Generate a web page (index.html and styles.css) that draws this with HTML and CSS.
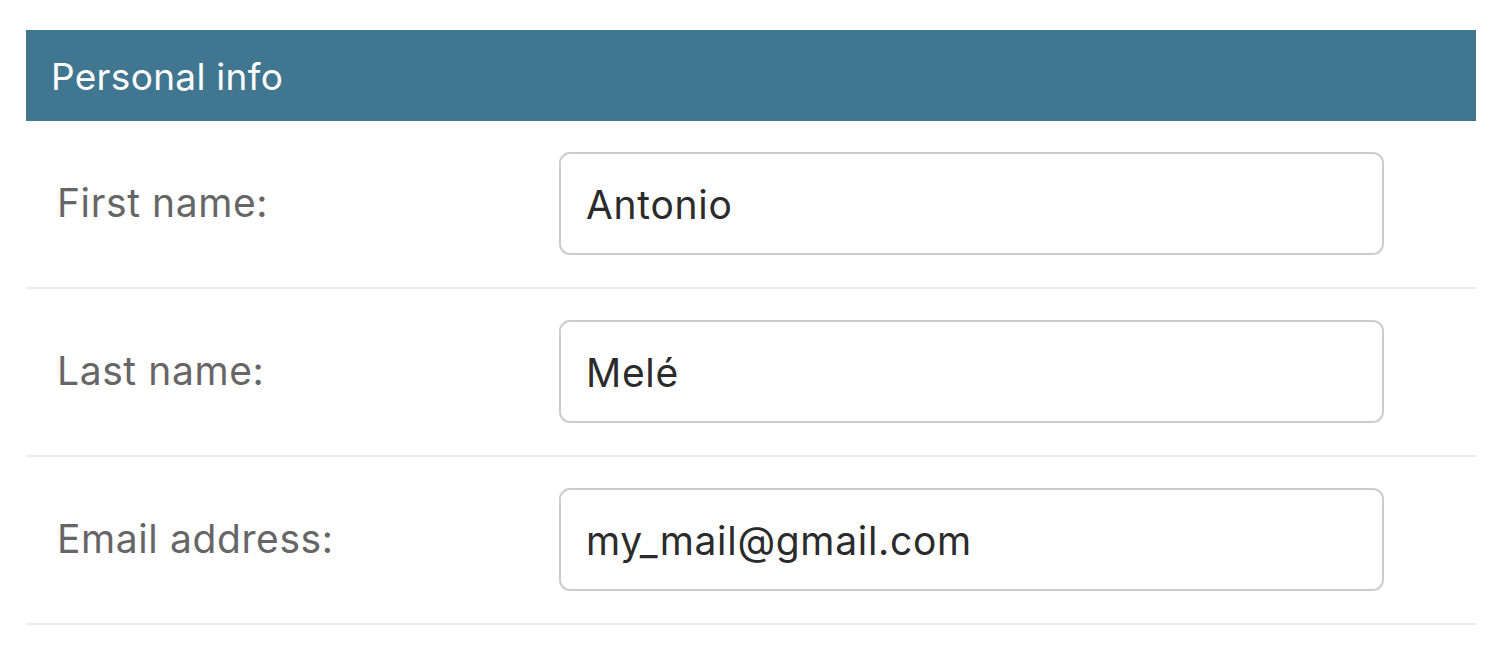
FILE: index.html
```html
<!DOCTYPE html>
<html>
<head>
<meta charset="utf-8">
<link rel="stylesheet" href="styles.css">
</head>
<body>
<fieldset class="module">
  <h2 class="module-title">Personal info</h2>
  <div class="form-row">
    <label class="field-label" for="first">First name:</label>
    <input class="field-input" id="first" type="text" value="Antonio">
  </div>
  <div class="form-row">
    <label class="field-label" for="last">Last name:</label>
    <input class="field-input" id="last" type="text" value="Melé">
  </div>
  <div class="form-row">
    <label class="field-label" for="email">Email address:</label>
    <input class="field-input" id="email" type="text" value="my_mail@gmail.com">
  </div>
</fieldset>
</body>
</html>
```

FILE: styles.css
```css
html, body {
  margin: 0;
  padding: 0;
  background: #ffffff;
}

body {
  font-family: Inter, "Liberation Sans", Arial, sans-serif;
}

.module {
  margin: 30px 0 0 26px;
  padding: 0;
  border: none;
  width: 1450px;
  min-width: 0;
}

.module-title {
  margin: 0;
  height: 91px;
  box-sizing: border-box;
  padding: 1px 0 0 25px;
  display: flex;
  align-items: center;
  background: #417690;
  color: #ffffff;
  font-size: 37px;
  font-weight: normal;
  letter-spacing: 0.3px;
}

.form-row {
  display: flex;
  align-items: flex-start;
  padding: 31px 0 32px 31px;
  border-bottom: 2px solid #eaeaea;
}

.field-label {
  width: 502px;
  flex: none;
  color: #666666;
  font-size: 39px;
  letter-spacing: 0.6px;
  line-height: 1;
  padding-top: 31px;
}

.field-input {
  width: 825px;
  height: 103px;
  box-sizing: border-box;
  margin: 0;
  border: 2px solid #cccccc;
  border-radius: 11px;
  padding: 1px 0 0 25px;
  font-family: Inter, "Liberation Sans", Arial, sans-serif;
  font-size: 39px;
  letter-spacing: 0.7px;
  color: #2b2b2b;
  background: #ffffff;
  outline: none;
}
```
